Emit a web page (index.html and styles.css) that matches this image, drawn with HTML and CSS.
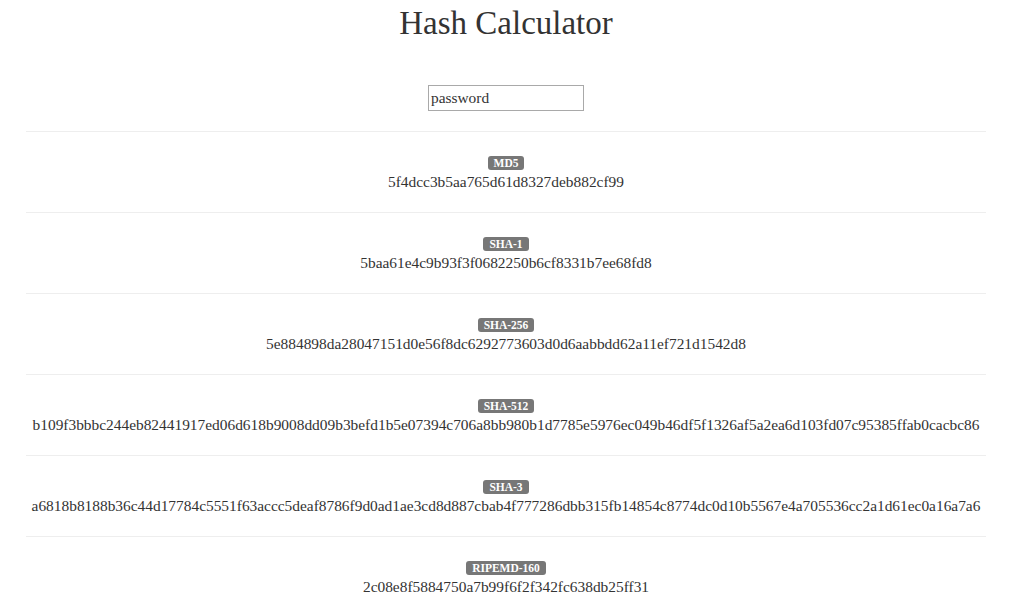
FILE: index.html
```html
<!DOCTYPE html>
<html>
<head>
<meta charset="utf-8">
<title>Hash Calculator</title>
<link rel="stylesheet" href="styles.css">
</head>
<body>
<div class="container">
  <h1 class="title">Hash Calculator</h1>
  <div class="input-row"><input class="pw" type="text" value="password"></div>
  <hr class="sep">
  <div class="hash"><span class="label">MD5</span><div class="value">5f4dcc3b5aa765d61d8327deb882cf99</div></div>
  <hr class="sep">
  <div class="hash"><span class="label">SHA-1</span><div class="value">5baa61e4c9b93f3f0682250b6cf8331b7ee68fd8</div></div>
  <hr class="sep">
  <div class="hash"><span class="label">SHA-256</span><div class="value">5e884898da28047151d0e56f8dc6292773603d0d6aabbdd62a11ef721d1542d8</div></div>
  <hr class="sep">
  <div class="hash"><span class="label">SHA-512</span><div class="value">b109f3bbbc244eb82441917ed06d618b9008dd09b3befd1b5e07394c706a8bb980b1d7785e5976ec049b46df5f1326af5a2ea6d103fd07c95385ffab0cacbc86</div></div>
  <hr class="sep">
  <div class="hash"><span class="label">SHA-3</span><div class="value">a6818b8188b36c44d17784c5551f63accc5deaf8786f9d0ad1ae3cd8d887cbab4f777286dbb315fb14854c8774dc0d10b5567e4a705536cc2a1d61ec0a16a7a6</div></div>
  <hr class="sep">
  <div class="hash"><span class="label">RIPEMD-160</span><div class="value">2c08e8f5884750a7b99f6f2f342fc638db25ff31</div></div>
</div>
</body>
</html>
```

FILE: styles.css
```css
html, body {
  margin: 0;
  padding: 0;
  background: #fff;
}
body {
  font-family: "Liberation Serif", "DejaVu Serif", serif;
  font-size: 15.4px;
  line-height: 20px;
  color: #333;
}
.container {
  width: 960px;
  margin: 0 0 0 26px;
  text-align: center;
}
.title {
  margin: 0;
  padding-top: 3px;
  font-size: 33px;
  line-height: 40px;
  font-weight: normal;
  color: #333;
}
.input-row {
  margin-top: 42px;
  height: 26px;
}
.pw {
  box-sizing: border-box;
  width: 156px;
  height: 26px;
  margin: 0;
  padding: 1px 2px;
  border: 1px solid #a9a9a9;
  font-family: "Liberation Serif", serif;
  font-size: 15.4px;
  color: #333;
  outline: none;
  vertical-align: top;
}
.sep {
  margin: 20px 0;
  border: 0;
  border-top: 1px solid #eee;
  height: 0;
}
.hash {
  height: 40px;
}
.label {
  display: inline-block;
  vertical-align: top;
  margin-top: 4px;
  padding: 0 6px;
  height: 14px;
  line-height: 14px;
  font-size: 11.5px;
  font-weight: bold;
  color: #fff;
  background: #777;
  border-radius: 3px;
}
.value {
  line-height: 20px;
  height: 20px;
  white-space: nowrap;
}
```
